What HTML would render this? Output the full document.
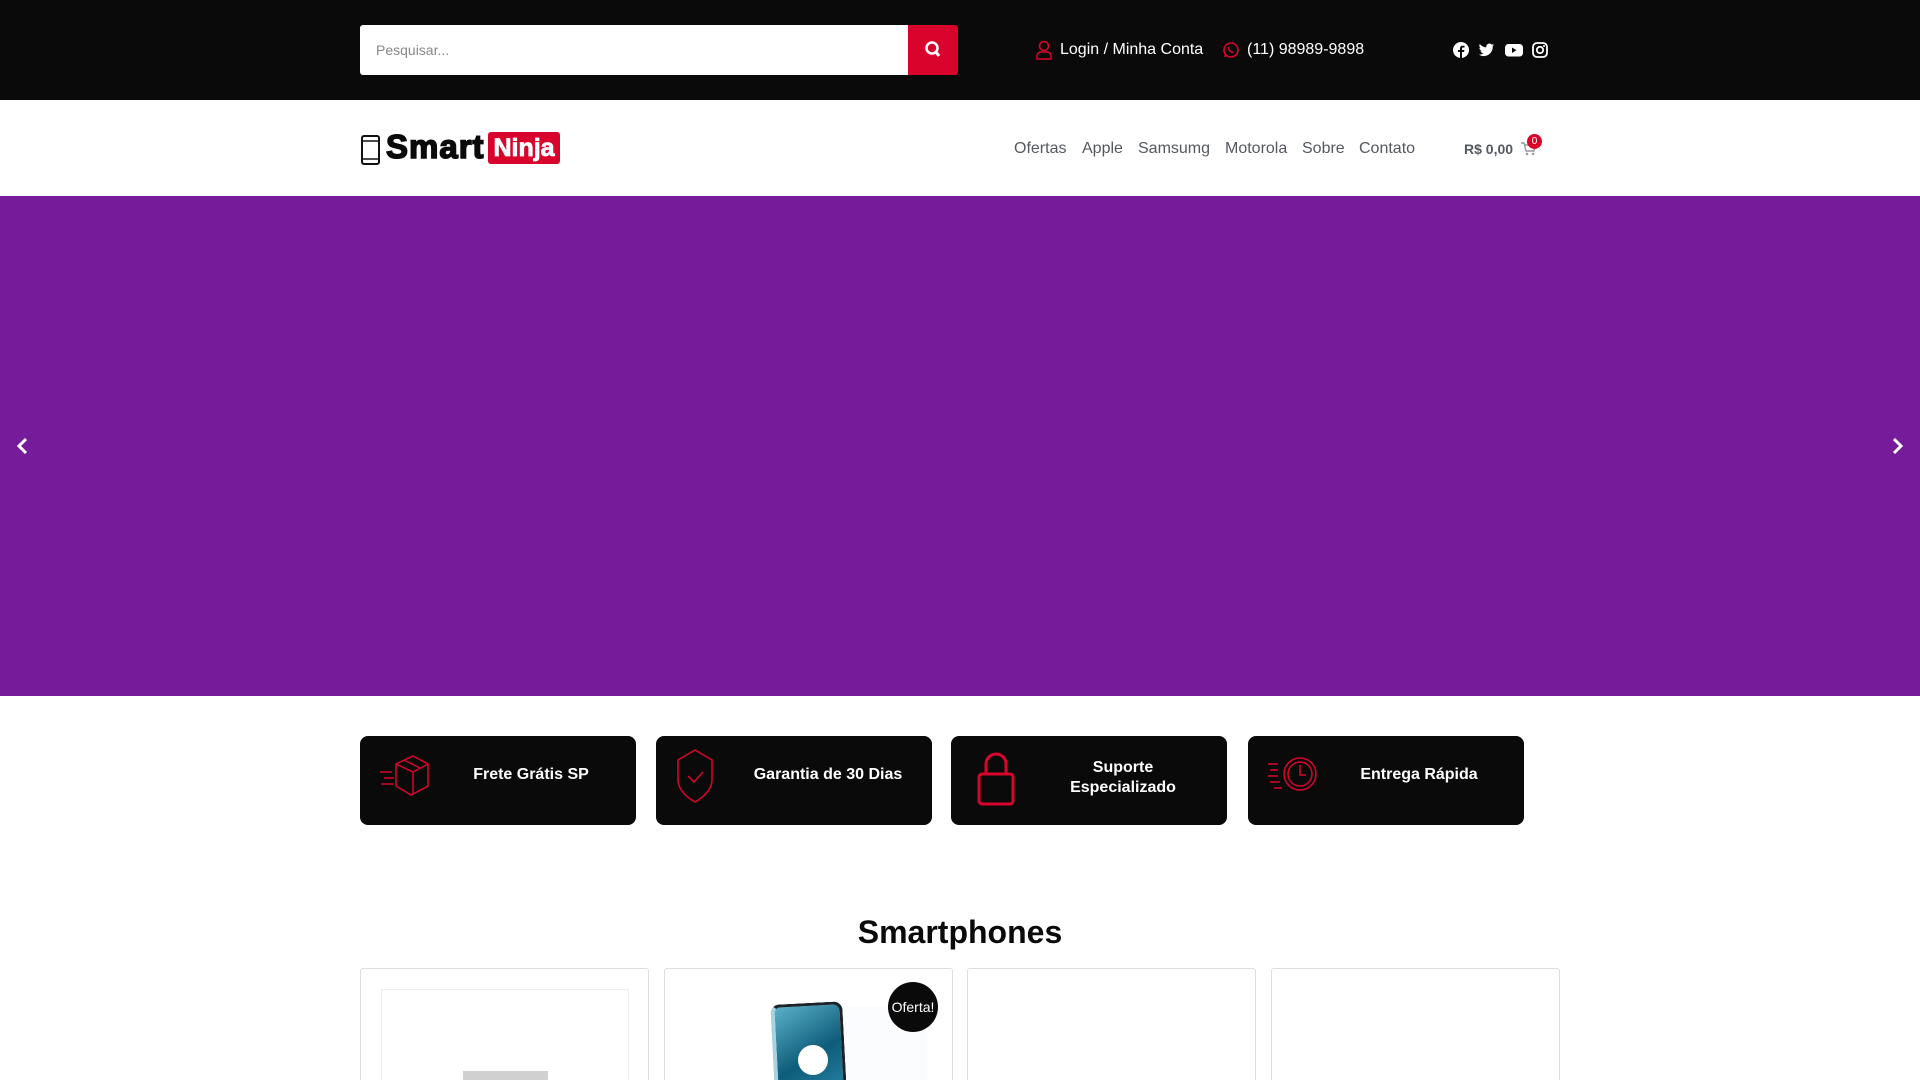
<!DOCTYPE html>
<html><head><meta charset="utf-8"><style>
*{margin:0;padding:0;box-sizing:border-box}
html,body{width:1920px;height:1080px;overflow:hidden}
body{font-family:"Liberation Sans",sans-serif;background:#fff;position:relative}
.abs{position:absolute}
.top{left:0;top:0;width:1920px;height:100px;background:#0b0a0b}
.search{left:360px;top:25px;width:549px;height:50px;background:#fff;border-radius:3px 0 0 3px;color:#888;font-size:14px;line-height:50px;padding-left:16px}
.sbtn{left:908px;top:25px;width:50px;height:50px;background:#d9042b;border-radius:0 3px 3px 0}
.tl{color:#fff;font-size:16px;top:41px}
.nav{top:140px;font-size:16px;color:#54595f}
.hero{left:0;top:196px;width:1920px;height:500px;background:#761c9a}
.feat{top:736px;width:276px;height:89px;background:#0b0a0b;border-radius:8px;color:#fff;font-weight:bold;font-size:16px}
.feat span{position:absolute;text-align:center;width:130px;line-height:20px}
.card{top:968px;width:289px;height:112px;border:1px solid #ddd;border-bottom:none;border-radius:3px 3px 0 0;overflow:hidden}
</style></head><body>
<div class="abs top"></div>
<div class="abs search">Pesquisar...</div>
<div class="abs sbtn"><svg width="50" height="50"><circle cx="24" cy="23" r="5.5" fill="none" stroke="#fff" stroke-width="2.5"/><line x1="28" y1="27" x2="31" y2="31" stroke="#fff" stroke-width="3"/></svg></div>
<svg class="abs" style="left:1035px;top:40px" width="18" height="20"><circle cx="9" cy="6" r="4.5" fill="none" stroke="#d9042b" stroke-width="1.6"/><path d="M2 19v-3a4 4 0 0 1 4-4h6a4 4 0 0 1 4 4v3z" fill="none" stroke="#d9042b" stroke-width="1.6"/></svg>
<div class="abs tl" style="left:1060px">Login / Minha Conta</div>
<svg class="abs" style="left:1222px;top:41px" width="18" height="18"><circle cx="9" cy="9" r="7" fill="none" stroke="#d9042b" stroke-width="1.6"/><path d="M3 16l1-3" stroke="#d9042b" stroke-width="2"/><path d="M6.5 6c0 3 2 5.5 5 5.5" stroke="#d9042b" stroke-width="1.6" fill="none"/></svg>
<div class="abs tl" style="left:1247px">(11) 98989-9898</div>
<svg class="abs" style="left:1452px;top:41px" width="18" height="18"><circle cx="9" cy="9" r="8" fill="#fff"/><path d="M10 17v-6h2l.4-2H10V7.5c0-.6.3-1 1-1h1.5V4.7H10.6C9 4.7 8 5.7 8 7.3V9H6v2h2v6z" fill="#0b0a0b"/></svg>
<svg class="abs" style="left:1477px;top:41px" width="18" height="18"><path d="M17 4c-.6.3-1.2.4-1.8.5.7-.4 1.1-1 1.4-1.7-.6.4-1.3.6-2 .8a3.1 3.1 0 0 0-5.3 2.8C6.700 6.3 4.400 5 2.8 3c-.9 1.5-.4 3.4 1 4.200-.5 0-1-.2-1.4-.4 0 1.6 1.100 2.9 2.5 3.2-.5.1-1 .2-1.4.1.4 1.3 1.6 2.1 2.9 2.2-1.3 1-3 1.5-4.600 1.3 6.500 4 14.200-.6 14-8.4.6-.4 1-.9 1.200-1.200z" fill="#fff"/></svg>
<svg class="abs" style="left:1504px;top:41px" width="20" height="18"><rect x="1" y="3" width="18" height="12.5" rx="3.5" fill="#fff"/><path d="M8 6.5v5.5l4.5-2.7z" fill="#0b0a0b"/></svg>
<svg class="abs" style="left:1531px;top:41px" width="18" height="18"><rect x="2" y="2" width="14" height="14" rx="4" fill="none" stroke="#fff" stroke-width="1.8"/><circle cx="9" cy="9" r="3.2" fill="none" stroke="#fff" stroke-width="1.8"/><circle cx="13" cy="5" r="1" fill="#fff"/></svg>

<svg class="abs" style="left:360px;top:135px" width="22" height="30"><rect x="2" y="1" width="17" height="28" rx="2" fill="none" stroke="#111" stroke-width="2"/><line x1="2" y1="6" x2="19" y2="6" stroke="#111" stroke-width="1.5"/><line x1="2" y1="24" x2="19" y2="24" stroke="#111" stroke-width="1.5"/></svg>
<div class="abs" style="left:386px;top:128px;font-size:33px;font-weight:900;color:#0b0a0b;letter-spacing:1px;-webkit-text-stroke:1.5px #0b0a0b">Smart</div>
<div class="abs" style="left:488px;top:132px;width:72px;height:32px;background:#d9042b;border-radius:3px;color:#fff;font-size:25px;font-weight:900;line-height:32px;text-align:center;-webkit-text-stroke:.8px #fff">Ninja</div>

<div class="abs nav" style="left:1014px">Ofertas</div>
<div class="abs nav" style="left:1082px">Apple</div>
<div class="abs nav" style="left:1138px">Samsumg</div>
<div class="abs nav" style="left:1225px">Motorola</div>
<div class="abs nav" style="left:1302px">Sobre</div>
<div class="abs nav" style="left:1359px">Contato</div>
<div class="abs" style="left:1464px;top:141px;font-size:14px;font-weight:bold;color:#54595f">R$ 0,00</div>
<svg class="abs" style="left:1520px;top:141px" width="16" height="16"><path d="M1 2h3l2 8h8l1.5-6H5" fill="none" stroke="#999" stroke-width="1.4"/><circle cx="7" cy="13" r="1.3" fill="#999"/><circle cx="13" cy="13" r="1.3" fill="#999"/></svg>
<div class="abs" style="left:1527px;top:134px;width:15px;height:15px;border-radius:50%;background:#d9042b;color:#fff;font-size:10px;text-align:center;line-height:15px">0</div>

<div class="abs hero"></div>
<svg class="abs" style="left:14px;top:436px" width="18" height="20"><path d="M12 3l-7 7 7 7" fill="none" stroke="#fff" stroke-width="3"/></svg>
<svg class="abs" style="left:1888px;top:436px" width="18" height="20"><path d="M6 3l7 7-7 7" fill="none" stroke="#fff" stroke-width="3"/></svg>

<div class="abs feat" style="left:360px"><svg class="abs" style="left:18px;top:18px" width="55" height="42" fill="none" stroke="#d9042b" stroke-width="1.5"><path d="M18 10l17-8 15 8v22l-17 9-15-9zM18 10l17 8 15-8M35 18v23M26 6l16 8"/><path d="M2 18h12M6 24h10M3 30h12"/></svg><span style="left:106px;top:29px">Frete Grátis SP</span></div>
<div class="abs feat" style="left:656px"><svg class="abs" style="left:18px;top:12px" width="44" height="56" fill="none" stroke="#d9042b" stroke-width="1.5"><path d="M21 2L4 12v20c0 9 8 17 17 22 9-5 17-13 17-22V12z"/><path d="M14 28l6 6 9-10"/></svg><span style="left:82px;top:29px;width:180px">Garantia de 30 Dias</span></div>
<div class="abs feat" style="left:951px"><svg class="abs" style="left:25px;top:16px" width="40" height="56" fill="none" stroke="#d9042b" stroke-width="3"><path d="M10 22V12a10 10 0 0 1 20 0v10"/><rect x="3" y="22" width="34" height="30" rx="3"/></svg><span style="left:107px;top:22px;width:130px">Suporte Especializado</span></div>
<div class="abs feat" style="left:1248px"><svg class="abs" style="left:18px;top:18px" width="56" height="44" fill="none" stroke="#d9042b" stroke-width="1.5"><circle cx="34" cy="20" r="16"/><circle cx="34" cy="20" r="12"/><path d="M34 11v10h6"/><path d="M2 10h10M4 16h8M2 22h10M4 28h10M8 34h8"/></svg><span style="left:81px;top:29px;width:180px">Entrega Rápida</span></div>

<div class="abs" style="left:0;width:1920px;top:914px;text-align:center;font-size:32px;font-weight:bold;color:#0b0a0b">Smartphones</div>

<div class="abs card" style="left:360px"><div class="abs" style="left:20px;top:20px;width:248px;height:120px;border:1px solid #eee"></div><div class="abs" style="left:102px;top:102px;width:85px;height:20px;background:#d0d0d0"></div></div>
<div class="abs card" style="left:664px"><div class="abs" style="left:110px;top:38px;width:152px;height:90px;background:#fafcfd"></div><div class="abs" style="left:108px;top:34px;width:72px;height:110px;border-radius:9px 9px 0 0;background:linear-gradient(150deg,#5ab0c8,#0e5c7a 50%,#2f8fb0);border:3px solid #1b2228;border-left:4px solid #a9d2e0;transform:rotate(-3deg)"></div><div class="abs" style="left:133px;top:76px;width:30px;height:30px;border-radius:50%;background:#fff"></div><div class="abs" style="left:223px;top:13px;width:50px;height:50px;border-radius:50%;background:#0b0a0b;color:#fff;font-size:14px;text-align:center;line-height:50px">Oferta!</div></div>
<div class="abs card" style="left:967px"></div>
<div class="abs card" style="left:1271px"></div>
</body></html>
